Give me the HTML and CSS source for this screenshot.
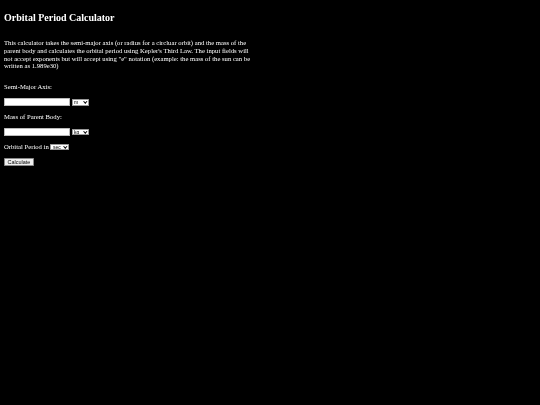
FILE: index.html
```html
<!DOCTYPE html>
<html>
<head>
<meta charset="utf-8">
<title>Orbital Period Calculator</title>
<link rel="stylesheet" href="styles.css">
</head>
<body>
<h2 class="title">Orbital Period Calculator</h2>
<p class="intro">This calculator takes the semi-major axis (or radius for a circluar orbit) and the mass of the parent body and calculates the orbital period using Kepler's Third Law. The input fields will not accept exponents but will accept using "e" notation (example: the mass of the sun can be written as 1.989e30)</p>
<p class="label">Semi-Major Axis:</p>
<div class="row"><input class="field" type="text"><span class="sel"><select class="unit"><option>m</option></select></span></div>
<p class="label">Mass of Parent Body:</p>
<div class="row"><input class="field" type="text"><span class="sel"><select class="unit"><option>kg</option></select></span></div>
<p class="label period">Orbital Period in <span class="sel"><select class="unit"><option>sec</option></select></span></p>
<div class="row"><button class="calc" type="button">Calculate</button></div>
</body>
</html>
```
FILE: styles.css
```css
html { background: #000; }
body {
  margin: 3.3px 4px;
  background: #000;
  color: #fff;
  font-family: "Liberation Serif", "Times New Roman", serif;
  font-size: 6.67px;
  line-height: 7.67px;
  will-change: transform;
}
.title {
  font-size: 10px;
  line-height: 11.5px;
  font-weight: bold;
  margin: 9.3px 0 8.3px;
}
.intro {
  width: 252px;
  margin: 15.4px 0 13.6px;
}
.label {
  margin: 6.67px 0;
}
.row {
  display: flex;
  align-items: center;
  gap: 1.5px;
  height: 8.8px;
}
.field {
  box-sizing: border-box;
  width: 66px;
  height: 8px;
  margin: 0;
  padding: 0 1px;
  border: 0.5px solid #bbb;
  border-radius: 0.5px;
  background: #fff;
  font-size: 5.5px;
}
.sel {
  position: relative;
  display: inline-block;
  vertical-align: middle;
}
.sel::after {
  content: "";
  position: absolute;
  right: 2.6px;
  top: 1.7px;
  width: 1.6px;
  height: 1.6px;
  border-right: 0.9px solid #000;
  border-bottom: 0.9px solid #000;
  transform: rotate(45deg);
  pointer-events: none;
}
.unit {
  appearance: none;
  -webkit-appearance: none;
  box-sizing: border-box;
  display: block;
  height: 6.8px;
  min-width: 17.5px;
  margin: 0;
  padding: 0 7px 0 1.5px;
  border: 0.5px solid #999;
  border-radius: 0.5px;
  background: #fff;
  color: #000;
  font-family: "Liberation Sans", Arial, sans-serif;
  font-size: 5px;
  line-height: 5.8px;
}
.period .sel {
  margin-top: -1px;
}
.calc {
  box-sizing: border-box;
  height: 7.6px;
  margin: 1px 0 0;
  padding: 0 2.5px;
  border: 0.5px solid #888;
  border-radius: 0.8px;
  background: #efefef;
  color: #000;
  font-family: "Liberation Sans", Arial, sans-serif;
  font-size: 5.5px;
  line-height: 6px;
}
```
